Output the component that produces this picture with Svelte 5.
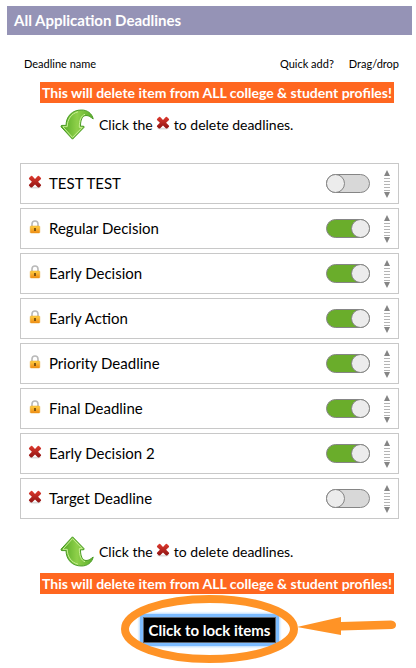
<script>
  let deadlines = [
    { id: 1, name: 'TEST TEST', locked: false, quickAdd: false },
    { id: 2, name: 'Regular Decision', locked: true, quickAdd: true },
    { id: 3, name: 'Early Decision', locked: true, quickAdd: true },
    { id: 4, name: 'Early Action', locked: true, quickAdd: true },
    { id: 5, name: 'Priority Deadline', locked: true, quickAdd: true },
    { id: 6, name: 'Final Deadline', locked: true, quickAdd: true },
    { id: 7, name: 'Early Decision 2', locked: false, quickAdd: true },
    { id: 8, name: 'Target Deadline', locked: false, quickAdd: false }
  ];

  function removeDeadline(id) {
    deadlines = deadlines.filter((deadline) => deadline.id !== id);
  }

  function lockItems() {
    deadlines = deadlines.map((deadline) => ({ ...deadline, locked: true }));
  }
</script>

<svg class="defs" width="0" height="0" aria-hidden="true">
  <defs>
    <linearGradient id="red" x1="0" y1="0" x2="0" y2="1">
      <stop offset="0" stop-color="#de3a2e" />
      <stop offset="1" stop-color="#8f1313" />
    </linearGradient>
    <linearGradient id="gold" x1="0" y1="0" x2="0" y2="1">
      <stop offset="0" stop-color="#ffd044" />
      <stop offset="1" stop-color="#ef8a12" />
    </linearGradient>
    <linearGradient id="green" x1="0" y1="0" x2="1" y2="0">
      <stop offset="0" stop-color="#4fa621" />
      <stop offset="0.5" stop-color="#8fd04a" />
      <stop offset="1" stop-color="#5aae2b" />
    </linearGradient>
  </defs>
</svg>

{#snippet cross()}
  <svg width="14" height="14" viewBox="0 0 14 14" aria-hidden="true">
    <ellipse cx="7" cy="12.6" rx="6" ry="0.8" fill="#dcdcdc" />
    <path
      d="M1 3 3 .9Q3.6.6 4.2 1.1L7 3.9 9.8 1.1Q10.4.6 11 .9L13 3Q13.3 3.6 12.8 4.2L10.1 6.8 12.8 9.5Q13.3 10.1 13 10.7L11.1 12.5Q10.4 12.8 9.8 12.3L7 9.6 4.2 12.3Q3.6 12.8 2.9 12.5L1 10.7Q.7 10.1 1.2 9.5L3.9 6.8 1.2 4.2Q.7 3.6 1 3Z"
      fill="url(#red)"
    />
  </svg>
{/snippet}

{#snippet hint(up)}
  <div class="hint">
    {#if up}
      <svg width="34" height="31" viewBox="0 0 34 31" aria-hidden="true">
        <path
          d="M12.5.8 24 12.6Q24.6 13.8 23 13.8H20.5C20.4 20 22.5 24.4 26 24.5 29 24.6 30.8 22.8 33.2 21 32 26.5 27.5 30 21.5 30 12 30 6.2 23.8 6 14.6H2Q.4 14.4 1.2 13Z"
          fill="url(#green)" stroke="#4b9c26"
        />
        <path d="M12.5 2.6 22.3 12.6H19.3C19.2 19.5 21 24.5 25 25.7M12.5 2.6 2.8 13.3H7.2C7.4 21 11.5 26.5 18 28.2" fill="none" stroke="#c9f095" />
      </svg>
    {:else}
      <svg width="34" height="31" viewBox="0 0 34 31" aria-hidden="true">
        <path
          d="M12.5 30.2 24 18.4Q24.6 17.2 23 17.2H20.5C20.4 11 22.5 6.6 26 6.5 29 6.4 30.8 8.2 33.2 10 32 4.5 27.5 1 21.5 1 12 1 6.2 7.2 6 16.4H2Q.4 16.6 1.2 18Z"
          fill="url(#green)" stroke="#4b9c26"
        />
        <path d="M12.5 28.4 22.3 18.4H19.3C19.2 11.5 21 6.5 25 5.3M12.5 28.4 2.8 17.7H7.2C7.4 10 11.5 4.5 18 2.8" fill="none" stroke="#c9f095" />
      </svg>
    {/if}
    <p>Click the {@render cross()} to delete deadlines.</p>
  </div>
{/snippet}

<main>
  <h1>All Application Deadlines</h1>

  <div class="content">
    <div class="columns">
      <span class="name">Deadline name</span>
      <span>Quick add?</span>
      <span>Drag/drop</span>
    </div>

    <p class="warning">This will delete item from ALL college &amp; student profiles!</p>
    {@render hint(false)}

    <ul>
      {#each deadlines as deadline (deadline.id)}
        <li>
          {#if deadline.locked}
            <span class="status">
              <svg width="14" height="14" viewBox="0 0 14 14" aria-hidden="true">
                <path d="M4 7V4Q4 1 7 1T10 4V7" fill="none" stroke="#b9b9b9" stroke-width="1.6" />
                <rect x="2.2" y="6" width="9.6" height="7" rx="0.8" fill="url(#gold)" stroke="#e7a02a" stroke-width="0.5" />
                <rect x="6.2" y="8" width="1.6" height="3" fill="#65430c" />
              </svg>
            </span>
          {:else}
            <button class="status" aria-label="Delete {deadline.name}" on:click={() => removeDeadline(deadline.id)}>
              {@render cross()}
            </button>
          {/if}
          <label for="quick-{deadline.id}">{deadline.name}</label>
          <input id="quick-{deadline.id}" class="toggle" type="checkbox" bind:checked={deadline.quickAdd} />
          <button class="handle" aria-label="Move {deadline.name}">
            <svg width="8" height="28" viewBox="0 0 8 28" aria-hidden="true">
              <path d="M4 0 7 6H1ZM1 22H7L4 28Z" fill="#858585" />
              <path d="M1 8.5H7M1 11.5H7M1 14.5H7M1 17.5H7M1 20.5H7" stroke="#b5b5b5" />
            </svg>
          </button>
        </li>
      {/each}
    </ul>

    {@render hint(true)}
    <p class="warning">This will delete item from ALL college &amp; student profiles!</p>
  </div>

  <div class="actions">
    <div class="lock-wrap">
      <button class="lock" on:click={lockItems}>Click to lock items</button>
      <svg class="callout" width="276" height="70" viewBox="0 0 276 70" aria-hidden="true">
        <ellipse cx="88.5" cy="35" rx="84.5" ry="30" fill="none" stroke="#ff9326" stroke-width="8" />
        <path d="M176 33 220 23V28L270 26.5Q275 27 275 31 275 34.5 271 35L220 36.5V41Z" fill="#ff9326" />
      </svg>
    </div>
  </div>
</main>

<style>
  :global(body) {
    margin: 0;
    background: #fff;
  }

  .defs {
    position: absolute;
  }

  main {
    padding: 6px 4px 0 7px;
    font-family: Lato, "Liberation Sans", sans-serif;
    color: #000;
  }

  h1 {
    margin: 0;
    padding: 0 7px;
    background: #9593b6;
    color: #fff;
    font-size: 15px;
    line-height: 29px;
  }

  p {
    margin: 0;
  }

  button {
    font-family: inherit;
    cursor: pointer;
  }

  .content {
    padding: 0 13px;
  }

  .columns {
    display: flex;
    gap: 15px;
    padding: 20px 0 9px 4px;
    font-size: 11px;
    line-height: 18px;
  }

  .name {
    flex: 1;
  }

  .warning {
    width: fit-content;
    margin-left: 20px;
    padding: 0 2px;
    background: #ff6720;
    color: #fff;
    font-size: 14px;
    font-weight: bold;
    line-height: 21px;
    white-space: nowrap;
  }

  .hint {
    display: flex;
    align-items: center;
    gap: 5px;
    margin: 6px 0 6px 40px;
    font-size: 14px;
    line-height: 20px;
  }

  ul {
    display: flex;
    flex-direction: column;
    gap: 4px;
    margin: 23px 0 17px;
    padding: 0;
    list-style: none;
  }

  li {
    display: flex;
    align-items: center;
    padding: 0 7px;
    height: 39px;
    border: 1px solid #c8c8c8;
  }

  .status,
  .handle {
    display: flex;
    padding: 0;
    border: 0;
    background: none;
  }

  .status {
    padding-bottom: 4px;
  }

  label {
    flex: 1;
    margin-left: 7px;
    padding-bottom: 2px;
    font-size: 15px;
  }

  .toggle {
    appearance: none;
    box-sizing: border-box;
    display: flex;
    width: 44px;
    height: 19px;
    margin: 0 13px 0 0;
    border: 1px solid #858585;
    border-radius: 10px;
    background: #d8d8d8;
    cursor: pointer;
  }

  .toggle::before {
    content: "";
    box-sizing: border-box;
    width: 19px;
    height: 19px;
    margin: -1px;
    border: 1px solid #858585;
    border-radius: 50%;
    background: #ececec;
  }

  .toggle:checked {
    justify-content: flex-end;
    background: #6aad2b;
  }

  .actions {
    display: flex;
    justify-content: center;
    padding: 23px 0 24px;
  }

  .lock-wrap {
    position: relative;
  }

  .lock {
    display: block;
    padding: 0 5px;
    border: 1px solid #5d6570;
    background: #000;
    box-shadow: 0 0 0 3px #7dbcff, 0 0 2px 4px #b9dbff;
    color: #fff;
    font-size: 15px;
    font-weight: bold;
    line-height: 24px;
    white-space: nowrap;
  }

  .callout {
    position: absolute;
    top: -23px;
    left: -22px;
    pointer-events: none;
  }
</style>
